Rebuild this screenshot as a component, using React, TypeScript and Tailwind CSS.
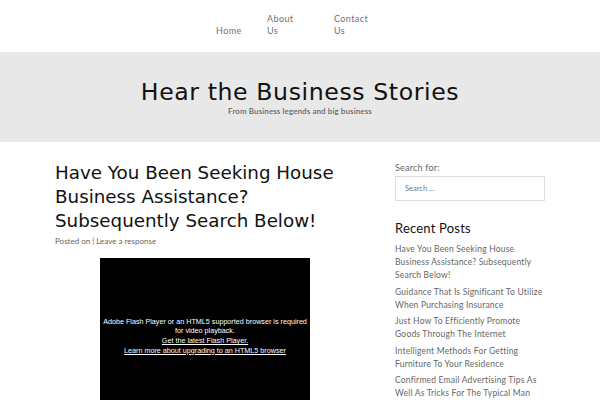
import React from "react";

const posts = [
  "Have You Been Seeking House Business Assistance? Subsequently Search Below!",
  "Guidance That Is Significant To Utilize When Purchasing Insurance",
  "Just How To Efficiently Promote Goods Through The Internet",
  "Intelligent Methods For Getting Furniture To Your Residence",
  "Confirmed Email Advertising Tips As Well As Tricks For The Typical Man",
];

export default function App() {
  return (
    <div className="w-[600px] h-[400px] overflow-hidden bg-white font-['Lato',sans-serif]">
      <nav className="h-[52px] flex justify-center items-end pb-[15px]">
        <ul className="flex items-end text-[9px] leading-[12px] text-[#707070] tracking-[0.4px]">
          <li className="w-[51px]">Home</li>
          <li className="w-[67px]">About<br />Us</li>
          <li className="w-[50px]">Contact<br />Us</li>
        </ul>
      </nav>
      <header className="h-[90px] bg-[#e8e8e8] flex flex-col items-center justify-center">
        <h1 className="font-['DejaVu_Sans',sans-serif] text-[23.6px] leading-[28px] text-[#111] tracking-[0.6px]">
          Hear the Business Stories
        </h1>
        <p className="text-[8px] leading-[10px] text-[#666] font-semibold tracking-[0.1px]">From Business legends and big business</p>
      </header>
      <div className="flex pt-[20px]">
        <main className="w-[285px] ml-[55px]">
          <h2 className="font-['DejaVu_Sans',sans-serif] text-[18.3px] leading-[24px] text-[#111] -mt-[1px]">
            Have You Been Seeking House Business Assistance? Subsequently Search Below!
          </h2>
          <p className="text-[8px] text-[#666] mt-[3px] leading-[10px]">Posted on | Leave a response</p>
          <div className="w-[210px] h-[160px] bg-black ml-[45px] mt-[12px] flex flex-col items-center justify-center text-white text-[7.2px] leading-[9.7px] text-center font-['Liberation_Sans',sans-serif] px-[2px] pb-[4px]">
            <p>Adobe Flash Player or an HTML5 supported browser is required for video playback.</p>
            <p className="underline">Get the latest Flash Player.</p>
            <p className="underline">Learn more about upgrading to an HTML5 browser</p>
          </div>
        </main>
        <aside className="w-[150px] ml-[55px]">
          <label className="block text-[9px] leading-[12px] text-[#666] tracking-[0.2px]">Search for:</label>
          <div className="mt-[2px] h-[25px] border border-[#ddd] flex items-center px-[9px] text-[7.5px] text-[#777]">
            Search …
          </div>
          <h3 className="mt-[19px] text-[13px] leading-[16px] text-[#111] tracking-[0.2px]">Recent Posts</h3>
          <ul className="mt-[7px] flex flex-col gap-[3.5px]">
            {posts.map((p) => (
              <li key={p} className="text-[8.5px] leading-[13px] text-[#666] tracking-[0.2px]">{p}</li>
            ))}
          </ul>
        </aside>
      </div>
    </div>
  );
}
